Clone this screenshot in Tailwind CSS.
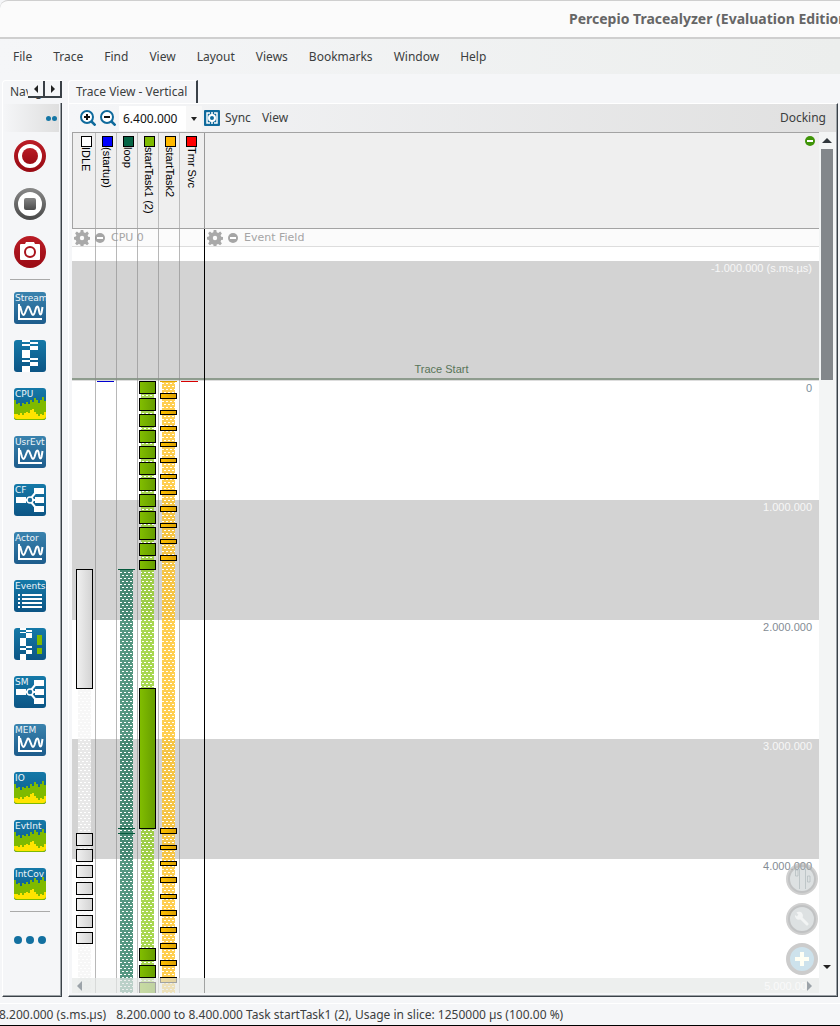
<!DOCTYPE html>
<html lang="en">
<head>
<meta charset="utf-8">
<title>Percepio Tracealyzer</title>
<script src="https://cdn.jsdelivr.net/npm/@tailwindcss/browser@4"></script>
</head>
<body class="flex min-h-screen flex-col overflow-x-hidden bg-[#f5f6f8] font-['Noto_Sans',sans-serif] text-xs leading-4 text-[#3c3e40]">
<svg class="absolute h-0 w-0" aria-hidden="true">
  <defs>
    <linearGradient id="blue" x1="0" y1="0" x2="0" y2="1"><stop offset="0" stop-color="#1579a8"/><stop offset="1" stop-color="#0c5585"/></linearGradient>
    <linearGradient id="soft" x1="0" y1="0" x2="0" y2="1"><stop offset="0" stop-color="#3a83ae"/><stop offset="1" stop-color="#1d5c8c"/></linearGradient>
    <linearGradient id="red" x1="0" y1="0" x2="0" y2="1"><stop offset="0" stop-color="#b91c25"/><stop offset="1" stop-color="#9a0b14"/></linearGradient>
    <linearGradient id="grey" x1="0" y1="0" x2="0" y2="1"><stop offset="0" stop-color="#858585"/><stop offset="1" stop-color="#4c4c4c"/></linearGradient>
    <symbol id="wave" viewBox="0 0 32 32"><rect width="32" height="32" rx="3" fill="url(#soft)"/><path d="M5 12v15h23" fill="none" stroke="#fff" stroke-width="2"/><path d="M6 14l2 7q1.500 4 3 0l2-5q1-3 2.500 0l2 5q1.500 4 3 0l1.500-5q1.500-3 2.500 0l1 5q1 3 2 0l1-6" fill="none" stroke="#fff" stroke-width="2"/></symbol>
    <symbol id="trace" viewBox="0 0 32 32"><rect width="32" height="32" rx="3" fill="url(#blue)"/><path d="M8 0h8v2H8zM16 2h8v2h-8zM8 4h8v2H8zM16 6h8v4h-8zM8 10h8v8H8zM16 18h8v2h-8zM8 20h8v2H8zM16 22h8v4h-8zM8 26h8v6H8z" fill="#fff"/></symbol>
    <symbol id="trace2" viewBox="0 0 32 32"><rect width="32" height="32" rx="3" fill="url(#blue)"/><path d="M6 0h6v2H6zM12 2h6v2h-6zM6 4h6v1H6zM12 5h6v5h-6zM6 10h6v8H6zM12 18h6v2h-6zM6 20h6v2H6zM12 22h6v4h-6zM6 26h6v6H6z" fill="#fff"/><path d="M23 7h5v10h-5zM23 20h5v6h-5z" fill="#7fba00"/></symbol>
    <symbol id="load" viewBox="0 0 32 32"><rect width="32" height="32" rx="3" fill="url(#blue)"/><path d="M0 12h2v4h2v-1h2v3h2v-3h2v1h2v-2h2v2h2v-4h2v2h2v-4h2v2h2v3h2v-3h2v-3h2v4h2v16a3 3 0 0 1-3 3H3a3 3 0 0 1-3-3z" fill="#7fba00"/><path d="M0 26h4v1h2v-2h2v2h2v-2h2v-1h2v1h2v-3h2v-1h2v3h2v2h2v2h2v-2h2v1h2v-3h2v4a3 3 0 0 1-3 3H3a3 3 0 0 1-3-3z" fill="#ffe400"/></symbol>
    <symbol id="flow" viewBox="0 0 32 32"><rect width="32" height="32" rx="3" fill="url(#blue)"/><path d="M16 16h6M10 16h4M17 14l5-6M17 18l5 6" stroke="#fff" stroke-width="2"/><circle cx="16" cy="16" r="3" fill="#1a6d9b" stroke="#fff" stroke-width="1.500"/><path d="M2 13h10v6H2zM20 4h10v6H20zM21 13h9v6h-9zM20 22h10v6H20z" fill="#fff"/></symbol>
    <symbol id="list" viewBox="0 0 32 32"><rect width="32" height="32" rx="3" fill="url(#blue)"/><path d="M4 15h2M8 15h20M4 19h2M8 19h20M4 23h2M8 23h20M4 27h2M8 27h20" stroke="#fff" stroke-width="2"/></symbol>
    <symbol id="gear" viewBox="0 0 16 16"><path d="M6.700 0h2.600l.4 2.300 1.500.6 2-1.300 1.700 1.800-1.300 1.900.6 1.400 2.300.4v2.500l-2.300.4-.6 1.500 1.300 1.900-1.800 1.800-1.900-1.300-1.500.6-.4 2.300H6.700l-.4-2.300-1.500-.6-1.900 1.300-1.800-1.800 1.300-1.900-.6-1.500L0 9.500V7l1.800-.4.6-1.400-1.300-1.900L2.900 1.600l1.900 1.300 1.500-.6z" fill="#a9a9a9"/><circle cx="8" cy="8" r="2.200" fill="#fbfbfb"/></symbol>
    <symbol id="minus" viewBox="0 0 10 10"><circle cx="5" cy="5" r="5" fill="currentColor"/><path d="M2 5h6" stroke="#fff" stroke-width="2"/></symbol>
  </defs>
</svg>

<header class="flex h-[39px] items-center overflow-hidden rounded-tl-lg border-t border-b-2 border-[#cfcfcf] bg-[#fbfbfb]">
  <h1 class="ml-[569px] text-sm font-bold whitespace-nowrap text-[#666]">Percepio Tracealyzer (Evaluation Edition)</h1>
</header>

<nav class="flex h-[35px] items-center gap-[21px] bg-linear-to-r from-[#f5f6f8] to-[#eceeed] pl-[13px]">
  <button>File</button><button>Trace</button><button>Find</button><button>View</button><button>Layout</button><button>Views</button><button>Bookmarks</button><button>Window</button><button>Help</button>
</nav>

<main class="flex flex-1 items-stretch pt-[6px] pr-[2px] pl-[2px]">
  <aside class="flex w-15 shrink-0 flex-col">
    <div class="relative h-[23px] overflow-hidden rounded-tl-sm border-t border-l border-white pt-[3px] pl-[7px]">
      <span>Navigate</span>
      <div class="absolute top-0 right-0 flex bg-[#f5f6f8]">
        <button aria-label="Scroll tabs left" class="flex h-[17px] w-[17px] items-center justify-center border-r-2 border-b-2 border-[#3a4046] bg-[#f5f6f8]"><svg width="4" height="8"><path d="M4 0v8L0 4z" fill="#222"/></svg></button>
        <button aria-label="Scroll tabs right" class="flex h-[17px] w-[17px] items-center justify-center border-r-2 border-b-2 border-[#3a4046] bg-[#f5f6f8]"><svg width="4" height="8"><path d="M0 0v8l4-4z" fill="#222"/></svg></button>
      </div>
    </div>
    <div class="flex flex-1 flex-col border-r border-b border-l border-r-[#3a4148] border-b-[#3a4148] border-l-white">
      <div class="flex flex-1 flex-col border-r border-b border-[#9ba1a5]">
        <div class="mt-px mr-px flex h-7 items-center justify-end gap-px bg-linear-to-r from-[#f5f6f8] to-[#dfdfdf] pr-[2px]">
          <i class="size-[5px] rounded-full bg-[#1576a5]"></i><i class="size-[5px] rounded-full bg-[#1576a5]"></i>
        </div>
        <div id="tools" class="flex flex-col items-center pt-2 pr-[3px]">
          <div class="flex flex-col gap-4">
            <button aria-label="Record" class="size-8"><svg viewBox="0 0 32 32"><circle cx="16" cy="16" r="14" fill="#fff" stroke="url(#red)" stroke-width="4"/><circle cx="16" cy="16" r="8" fill="url(#red)"/></svg></button>
            <button aria-label="Stop" class="size-8"><svg viewBox="0 0 32 32"><circle cx="16" cy="16" r="14" fill="#fff" stroke="url(#grey)" stroke-width="4"/><rect x="10" y="10" width="12" height="12" rx="2" fill="url(#grey)"/></svg></button>
            <button aria-label="Snapshot" class="size-8"><svg viewBox="0 0 32 32"><circle cx="16" cy="16" r="16" fill="url(#red)"/><path d="M6 9q0-1 1-1h4l1-2h8l1 2h4q1 0 1 1v14q0 1-1 1H7q-1 0-1-1z" fill="#fff"/><circle cx="16" cy="16" r="5" fill="none" stroke="#a8131c" stroke-width="2"/></svg></button>
          </div>
          <hr class="mt-[11px] mb-3 w-10 border-t border-[#aaa]">
          <div id="views" class="flex flex-col gap-4"></div>
          <hr class="mt-[11px] w-10 border-t border-[#aaa]">
          <button aria-label="More views" class="mt-6 flex gap-1"><i class="size-2 rounded-full bg-[#1370a0]"></i><i class="size-2 rounded-full bg-[#1370a0]"></i><i class="size-2 rounded-full bg-[#1370a0]"></i></button>
        </div>
      </div>
    </div>
  </aside>

  <section class="ml-[6px] flex min-w-0 flex-1 flex-col">
    <div class="h-[23px]">
      <button class="block h-[23px] rounded-tl-sm border-t border-r-2 border-l border-white border-r-[#3a4148] pr-[9px] pl-[7px]">Trace View - Vertical</button>
    </div>
    <div class="flex flex-1 flex-col border-t border-r border-b border-l border-t-white border-r-[#3a4148] border-b-[#3a4148] border-l-white">
      <div class="flex flex-1 flex-col border-r border-b border-[#9ba1a5] pb-[2px] pl-[3px]">
        <div class="flex h-7 items-center bg-linear-to-r from-[#f5f6f8] to-[#e0e0e0] pr-[10px] pl-2">
          <button aria-label="Zoom in" class="mr-1 size-4"><svg viewBox="0 0 16 16" fill="none"><circle cx="7" cy="7" r="6" fill="#fff" stroke="#0f6a9c" stroke-width="2"/><path d="M11 11l4.500 4.500" stroke="#0f6a9c" stroke-width="2.500"/><path d="M4 7h6M7 4v6" stroke="#111" stroke-width="2"/></svg></button>
          <button aria-label="Zoom out" class="mr-[3px] size-4"><svg viewBox="0 0 16 16" fill="none"><circle cx="7" cy="7" r="6" fill="#fff" stroke="#0f6a9c" stroke-width="2"/><path d="M11 11l4.500 4.500" stroke="#0f6a9c" stroke-width="2.500"/><path d="M4 7h6" stroke="#111" stroke-width="2"/></svg></button>
          <input aria-label="Zoom level" value="6.400.000" class="mt-px h-[25px] w-[67px] bg-white pl-1 text-[#111] outline-none">
          <button aria-label="Zoom presets" class="mt-px mr-[2px] flex h-[25px] w-4 items-center justify-center bg-[#f7f7f7]"><svg width="6" height="4"><path d="M0 0h6L3 4z" fill="#222"/></svg></button>
          <button aria-label="Synchronise" class="mr-[5px] size-4"><svg viewBox="0 0 16 16" fill="none"><rect width="16" height="16" rx="1" fill="#0f6a9c"/><path d="M6 3H3v10h3M10 3h3v10h-3" stroke="#fff" stroke-width="1.500"/><circle cx="8" cy="8" r="3" stroke="#fff" stroke-width="2"/><path d="M8 2v3M8 11v3" stroke="#fff" stroke-width="1.500"/></svg></button>
          <button class="mr-[11px]">Sync</button>
          <button>View</button>
          <button class="ml-auto">Docking</button>
        </div>

        <div class="flex flex-1">
          <div class="flex min-w-0 flex-1 flex-col">
            <div class="flex h-[97px] border-y border-l border-[#a3a3a3] bg-[#efefef] font-['Liberation_Sans',Arial,sans-serif] text-[11px] leading-3 text-black">
              <div class="flex w-[23px] flex-col items-center border-r border-[#bbb] pt-[3px] pl-1"><i class="size-[11px] border border-black bg-white"></i><span class="whitespace-nowrap [writing-mode:vertical-rl]">IDLE</span></div>
              <div class="flex w-[21px] flex-col items-center border-r border-[#bbb] pt-[3px] pl-[2px]"><i class="size-[11px] border border-black bg-[#0000ff]"></i><span class="whitespace-nowrap [writing-mode:vertical-rl]">(startup)</span></div>
              <div class="flex w-[21px] flex-col items-center border-r border-[#bbb] pt-[3px] pl-[2px]"><i class="size-[11px] border border-black bg-[#056445]"></i><span class="whitespace-nowrap [writing-mode:vertical-rl]">loop</span></div>
              <div class="flex w-[21px] flex-col items-center border-r border-[#bbb] pt-[3px] pl-[2px]"><i class="size-[11px] border border-black bg-[#7fba00]"></i><span class="whitespace-nowrap [writing-mode:vertical-rl]">startTask1 (2)</span></div>
              <div class="flex w-[21px] flex-col items-center border-r border-[#bbb] pt-[3px] pl-[2px]"><i class="size-[11px] border border-black bg-[#ffb900]"></i><span class="whitespace-nowrap [writing-mode:vertical-rl]">startTask2</span></div>
              <div class="flex w-[25px] flex-col items-start border-r border-[#999] pt-[3px] pl-[6px]"><i class="size-[11px] border border-black bg-[#ff0000]"></i><span class="whitespace-nowrap [writing-mode:vertical-rl]">Tmr Svc</span></div>
              <button aria-label="Collapse header" class="mt-[3px] mr-1 ml-auto size-[10px] text-[#3f9408]"><svg viewBox="0 0 10 10"><use href="#minus"/></svg></button>
            </div>

            <div class="relative flex flex-1 flex-col overflow-hidden bg-white font-['Liberation_Sans',Arial,sans-serif] text-[11px] leading-3">
              <div class="flex h-[18px] items-center border-b border-[#ddd] bg-[#fbfbfb] font-['DejaVu_Sans',sans-serif] text-[#a5a5a5]">
                <div class="flex w-[132px] items-center pl-[2px]"><svg class="mr-[5px] size-4"><use href="#gear"/></svg><svg class="mr-[6px] size-[10px]"><use href="#minus"/></svg>CPU 0</div>
                <div class="flex items-center pl-[3px]"><svg class="mr-[5px] size-4"><use href="#gear"/></svg><svg class="mr-[6px] size-[10px]"><use href="#minus"/></svg>Event Field</div>
              </div>
              <div class="mt-[14px] flex h-[119px] flex-col border-b-2 border-[#8e9c8e] bg-[#d3d3d3] pt-px">
                <span class="pr-[7px] text-right text-[#f7f7f7]">-1.000.000 (s.ms.µs)</span>
                <span class="mt-auto mb-[3px] pr-2 text-center text-[#587358]">Trace Start</span>
              </div>
              <div class="h-[120px] border-t border-[#ddd] pt-px pr-[7px] text-right text-[#7d8fa0]">0</div>
              <div class="h-[120px] bg-[#d3d3d3] pt-px pr-[7px] text-right text-[#f7f7f7]">1.000.000</div>
              <div class="h-[119px] pt-px pr-[7px] text-right text-[#848c94]">2.000.000</div>
              <div class="h-[120px] bg-[#d3d3d3] pt-px pr-[7px] text-right text-[#f7f7f7]">3.000.000</div>
              <div class="h-[119px] pt-px pr-[7px] text-right text-[#848c94]">4.000.000</div>

              <svg id="chart" class="absolute inset-0 h-full w-full" aria-hidden="true">
                <defs>
                  <pattern id="brick" width="4" height="6" patternUnits="userSpaceOnUse"><path d="M0 1h2v1H0zM2 4h2v1H2z" fill="#fff"/></pattern>
                  <linearGradient id="gIdle"><stop offset="0" stop-color="#f1f1f1"/><stop offset="1" stop-color="#d2d2d2"/></linearGradient>
                  <linearGradient id="gTask1"><stop offset="0" stop-color="#82be00"/><stop offset="1" stop-color="#669d00"/></linearGradient>
                  <linearGradient id="gTask2"><stop offset="0" stop-color="#ffc000"/><stop offset="1" stop-color="#dba000"/></linearGradient>
                </defs>
              </svg>

              <div class="absolute inset-x-0 bottom-0 flex h-[15px] items-center bg-[#e5e8e7]/70 pr-[7px] pl-[5px]">
                <svg width="5" height="10"><path d="M5 0v10L0 5z" fill="#9ca3a9"/></svg>
                <span class="ml-auto text-[#fafafa]">5.000.00</span>
                <svg width="5" height="10"><path d="M0 0v10l5-5z" fill="#9ca3a9"/></svg>
              </div>
              <div class="absolute right-px bottom-[18px] flex flex-col gap-2">
                <button aria-label="Markers" class="size-8"><svg viewBox="0 0 32 32" fill="none"><circle cx="16" cy="16" r="14" fill="#a9b5b7" fill-opacity=".4" stroke="#aaa" stroke-opacity=".55" stroke-width="4"/><path d="M13.500 6v20M19.500 6v20M9.500 7h2.500v6H9.500zM21.500 13h2.500v6h-2.500z" stroke="#aab4b8" stroke-opacity=".6"/></svg></button>
                <button aria-label="Settings" class="size-8"><svg viewBox="0 0 32 32" fill="none"><circle cx="16" cy="16" r="14" fill="#a9b5b7" fill-opacity=".4" stroke="#aaa" stroke-opacity=".55" stroke-width="4"/><path d="M13 13l8 8" stroke="#f2f4f4" stroke-width="3" stroke-linecap="round"/><path d="M10.500 9.500l2 2.500-1.500 1.500-2-1.500a4 4 0 1 0 1.500-2.500z" fill="#f2f4f4"/></svg></button>
                <button aria-label="Add" class="size-8"><svg viewBox="0 0 32 32" fill="none"><circle cx="16" cy="16" r="14" fill="#cde2ec" stroke="#ccc" stroke-width="4"/><path d="M9 16h14M16 9v14" stroke="#fffff4" stroke-width="4"/></svg></button>
              </div>
            </div>
          </div>

          <div class="mr-px flex w-4 flex-col items-center bg-[#f3f5f5]">
            <svg class="mt-[6px]" width="10" height="5"><path d="M0 5h10L5 0z" fill="#30363b"/></svg>
            <div class="mt-[6px] h-[231px] w-3 bg-[#83878b]"></div>
            <svg class="mt-auto mb-6" width="8" height="4"><path d="M0 0h8L4 4z" fill="#222"/></svg>
          </div>
        </div>
      </div>
    </div>
  </section>
</main>

<footer class="mt-[6px] flex h-[23px] items-center gap-[10px] overflow-hidden border-t border-b border-t-white border-b-black pt-px whitespace-nowrap">
  <span class="-ml-px">8.200.000 (s.ms.µs)</span>
  <span>8.200.000 to 8.400.000 Task startTask1 (2), Usage in slice: 1250000 µs (100.00 %)</span>
</footer>

<script>
const views = [['Stream','wave'],['','trace'],['CPU','load'],['UsrEvt','wave'],['CF','flow'],['Actor','wave'],['Events','list'],['','trace2'],['SM','flow'],['MEM','wave'],['IO','load'],['EvtInt','load'],['IntCov','load']];
document.getElementById('views').innerHTML = views.map(([t, s]) =>
  `<button aria-label="${t || s}" class="size-8"><svg viewBox="0 0 32 32"><use href="#${s}"/><text x="1" y="9" font-family="DejaVu Sans" font-size="9" fill="#eef4f8">${t}</text></svg></button>`).join('');

// Chart coordinates: x from the first column edge, y from the top of the field.
let out = '';
const rect = (x, y, w, h, extra) => { out += `<rect x="${x}" y="${y}" width="${w}" height="${h}" ${extra}/>`; };
[23, 44, 65, 86, 107].forEach(x => rect(x, 0, 1, '100%', 'fill="#888" fill-opacity=".6"'));
const lane = (x, y, colour, opacity) => {
  rect(x, y, 13, 1000, `fill="${colour}" fill-opacity="${opacity}"`);
  rect(x, y, 13, 1000, 'fill="url(#brick)"');
};
lane(6, 460, '#f2f2f2', .65);
lane(48, 341, '#056445', .68);
lane(69, 155, '#8fcc20', .78);
lane(90, 152, '#ffc21f', .78);
const bars = (x, fill, spans) => spans.forEach(([a, b]) =>
  rect(x + .5, a + .5, 16, b - a - 1, `fill="url(#${fill})" stroke="#000"`));
bars(4, 'gIdle', [[340,460],[604,617],[620,633],[636,649],[653,666],[669,682],[686,699],[703,715]]);
bars(67, 'gTask1', [[152,165],[169,182],[185,198],[201,214],[217,230],[233,246],[249,262],[265,278],[282,295],[298,311],[314,327],[331,341],[459,600],[719,732],[736,749],[753,770]]);
bars(88, 'gTask2', [[164,170],[181,186],[197,202],[213,218],[229,234],[245,250],[261,266],[277,283],[294,299],[310,315],[326,332],[599,605],[616,621],[632,637],[648,654],[665,670],[681,687],[698,704],[714,720],[731,737],[748,754]]);
rect(25, 152, 17, 1, 'fill="#0000d0"');
rect(88, 152, 17, 1, 'fill="#e0a400"');
rect(109, 152, 17, 1, 'fill="#d80000"');
[340, 599, 604].forEach(y => rect(46, y, 17, 1, 'fill="#05583c"'));
rect(132, 0, 1, '100%', 'fill="#000"');
document.getElementById('chart').insertAdjacentHTML('beforeend', out);
</script>
</body>
</html>
